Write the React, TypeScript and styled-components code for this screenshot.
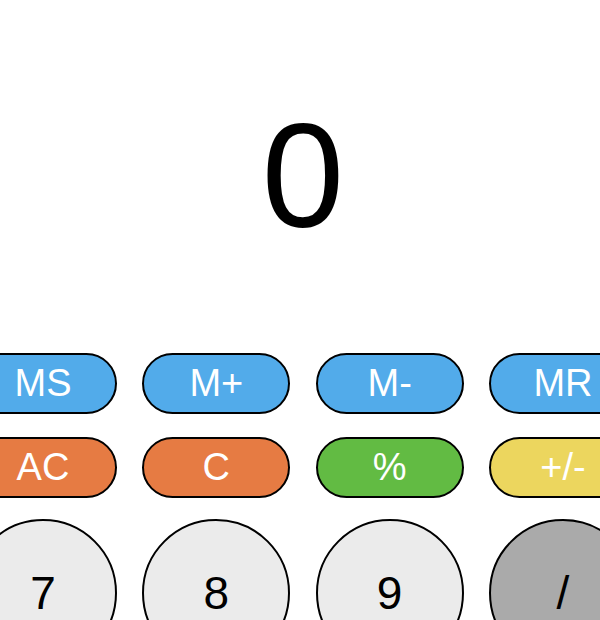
import React from "react";
import styled, { createGlobalStyle } from "styled-components";

const Global = createGlobalStyle`
  html, body {
    margin: 0;
    padding: 0;
    background: #ffffff;
    overflow: hidden;
    font-family: "Liberation Sans", Arial, sans-serif;
  }
`;

const Page = styled.div`
  width: 600px;
  height: 620px;
  display: flex;
  flex-direction: column;
  overflow: hidden;
`;

const Display = styled.div`
  height: 353px;
  flex-shrink: 0;
  display: flex;
  align-items: center;
  justify-content: center;
  font-size: 148px;
  line-height: 148px;
  color: #000;
  padding-left: 6px;
  padding-bottom: 2px;
  box-sizing: border-box;
`;

const Keypad = styled.div`
  width: 668px;
  margin-left: -31px;
  display: flex;
  flex-direction: column;
  gap: 21px;
  flex-shrink: 0;
`;

const Row = styled.div<{ $extra?: number }>`
  display: grid;
  grid-template-columns: repeat(4, 148px);
  column-gap: 25.33px;
  margin-bottom: ${(p) => p.$extra ?? 0}px;
`;

type Tone = "blue" | "orange" | "green" | "yellow" | "light" | "dark";

const fills: Record<Tone, string> = {
  blue: "#52abea",
  orange: "#e67b43",
  green: "#62bb43",
  yellow: "#ecd65e",
  light: "#ebebeb",
  dark: "#aaaaaa",
};

const Pill = styled.button<{ $tone: Tone }>`
  box-sizing: border-box;
  width: 148px;
  height: 61px;
  border: 2px solid #000;
  border-radius: 31px;
  background: ${(p) => fills[p.$tone]};
  color: #fff;
  font-family: "Liberation Sans", Arial, sans-serif;
  font-size: 38px;
  display: flex;
  align-items: center;
  justify-content: center;
  padding: 0;
`;

const Round = styled.button<{ $tone: Tone }>`
  box-sizing: border-box;
  width: 148px;
  height: 148px;
  border: 2px solid #000;
  border-radius: 50%;
  background: ${(p) => fills[p.$tone]};
  color: #000;
  font-family: "Liberation Sans", Arial, sans-serif;
  font-size: 46px;
  display: flex;
  align-items: center;
  justify-content: center;
  padding: 0;
`;

const memory = ["MS", "M+", "M-", "MR"];
const controls: { label: string; tone: Tone }[] = [
  { label: "AC", tone: "orange" },
  { label: "C", tone: "orange" },
  { label: "%", tone: "green" },
  { label: "+/-", tone: "yellow" },
];
const digits: { label: string; tone: Tone }[] = [
  { label: "7", tone: "light" },
  { label: "8", tone: "light" },
  { label: "9", tone: "light" },
  { label: "/", tone: "dark" },
];

export default function App() {
  return (
    <Page>
      <Global />
      <Display>0</Display>
      <Keypad>
        <Row $extra={2}>
          {memory.map((m) => (
            <Pill key={m} $tone="blue">
              {m}
            </Pill>
          ))}
        </Row>
        <Row>
          {controls.map((c) => (
            <Pill key={c.label} $tone={c.tone}>
              {c.label}
            </Pill>
          ))}
        </Row>
        <Row>
          {digits.map((d) => (
            <Round key={d.label} $tone={d.tone}>
              {d.label}
            </Round>
          ))}
        </Row>
      </Keypad>
    </Page>
  );
}
